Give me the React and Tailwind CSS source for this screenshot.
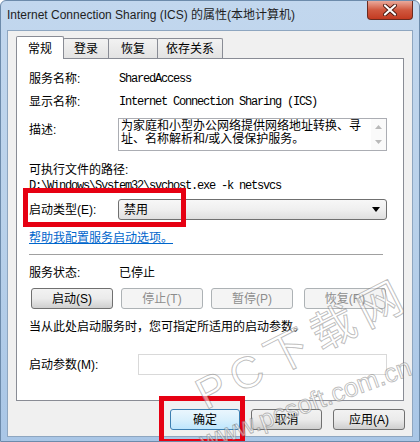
const cjk = "font-['Liberation_Sans','Noto_Sans_CJK_SC',sans-serif]";
const mono = "font-['Liberation_Mono','Noto_Sans_CJK_SC',monospace] tracking-[-1.2px]";

const tabs = [
  { label: "常规", w: "w-[48px]", active: true },
  { label: "登录", w: "w-[46px]" },
  { label: "恢复", w: "w-[50px]" },
  { label: "依存关系", w: "w-[66px]" },
];

const Btn = ({ children, w = "w-[82px]", disabled, primary }) => (
  <div
    className={`${w} h-[21px] flex items-center justify-center rounded-[3px] border text-[12px] ${
      disabled
        ? "border-[#adb2b5] bg-[#f4f4f4] text-[#8d8d8d]"
        : primary
        ? "border-[#3c7fb1] bg-gradient-to-b from-[#eaf6fd] via-[#d9f0fc] to-[#bee6fd] text-black"
        : "border-[#707070] bg-gradient-to-b from-[#f2f2f2] via-[#ebebeb] to-[#cfcfcf] text-black"
    }`}
  >
    {children}
  </div>
);

const Label = ({ children, className = "" }) => (
  <div className={`w-[90px] shrink-0 text-[12px] leading-[16px] ${className}`}>{children}</div>
);

export default function App() {
  return (
    <div className={`relative w-[420px] h-[442px] overflow-hidden rounded-t-[6px] border border-[#6d8bab] bg-gradient-to-b from-[#c2d7ee] via-[#b9d1ea] to-[#a9c6e6] ${cjk} text-black`}>
      {/* title bar */}
      <div className="h-[29px] flex items-start">
        <div className="pl-[6px] pt-[6px] text-[12px] leading-[16px] text-[#1e1e1e]">
          Internet Connection Sharing (ICS) 的属性(本地计算机)
        </div>
        <div className="ml-auto mr-[6px] w-[46px] h-[19px] rounded-b-[4px] border border-t-0 border-[#6b2a1f] bg-gradient-to-b from-[#e9a99b] via-[#d0583f] to-[#c33a20] flex items-center justify-center">
          <svg width="14" height="12" viewBox="0 0 14 12">
            <path d="M2 1.5 L12 10.5 M12 1.5 L2 10.5" stroke="#4a1a12" strokeWidth="4" strokeLinecap="round" />
            <path d="M2 1.5 L12 10.5 M12 1.5 L2 10.5" stroke="#ffffff" strokeWidth="2.2" strokeLinecap="round" />
          </svg>
        </div>
      </div>

      {/* client area */}
      <div className="mx-[6px] h-[407px] border border-[#8ea6c0] bg-[#f0f0f0] flex flex-col">
        {/* tabs */}
        <div className="flex items-end pl-[8px] pt-[4px] h-[27px]">
          {tabs.map((t) =>
            t.active ? (
              <div
                key={t.label}
                className={`${t.w} h-[23px] -mb-px relative z-10 bg-white border border-b-0 border-[#898c95] rounded-t-[2px] text-[12px] flex items-start justify-center pt-[3px]`}
              >
                {t.label}
              </div>
            ) : (
              <div
                key={t.label}
                className={`${t.w} h-[20px] -ml-px bg-gradient-to-b from-[#f2f2f2] to-[#e3e3e3] border border-b-0 border-[#898c95] rounded-t-[2px] text-[12px] flex items-center justify-center`}
              >
                {t.label}
              </div>
            )
          )}
        </div>

        {/* tab panel */}
        <div className="mx-[8px] h-[343px] bg-white border border-[#898c95] px-[12px] flex flex-col">
          <div className="flex mt-[12px]">
            <Label>服务名称:</Label>
            <div className={`${mono} text-[12px] leading-[16px]`}>SharedAccess</div>
          </div>
          <div className="flex mt-[7px]">
            <Label>显示名称:</Label>
            <div className={`${mono} text-[12px] leading-[16px]`}>Internet Connection Sharing (ICS)</div>
          </div>
          <div className="flex mt-[8px]">
            <Label className="pt-[4px]">描述:</Label>
            <div className="-ml-px w-[269px] h-[33px] border border-[#abadb3] flex">
              <div className="flex-1 pl-[2px] pt-[1px] text-[12px] leading-[13px]">
                <div className="whitespace-nowrap">为家庭和小型办公网络提供网络地址转换、寻</div>
                <div className="whitespace-nowrap">址、名称解析和/或入侵保护服务。</div>
              </div>
              <div className="w-[15px] flex flex-col items-center justify-between py-[6px] bg-[#fafafa]">
                <svg width="7" height="4" viewBox="0 0 7 4"><path d="M0 4 L3.5 0 L7 4 Z" fill="#b9b9b9" /></svg>
                <svg width="7" height="4" viewBox="0 0 7 4"><path d="M0 0 L3.5 4 L7 0 Z" fill="#b9b9b9" /></svg>
              </div>
            </div>
          </div>
          <div className="mt-[11px] text-[12px] leading-[16px]">可执行文件的路径:</div>
          <div className={`${mono} text-[12px] leading-[16px]`}>D:\Windows\System32\svchost.exe -k netsvcs</div>
          <div className="flex items-center mt-[5px]">
            <Label>启动类型(E):</Label>
            <div className="-ml-px w-[269px] h-[21px] rounded-[3px] border border-[#707070] bg-gradient-to-b from-[#f7f7f7] via-[#efefef] to-[#dfdfdf] flex items-center pl-[5px] pr-[6px] text-[12px]">
              <span>禁用</span>
              <svg className="ml-auto" width="8" height="5" viewBox="0 0 8 5"><path d="M0 0 L8 0 L4 5 Z" fill="#000" /></svg>
            </div>
          </div>
          <div className="mt-[10px] text-[12px] leading-[16px] text-[#0066cc] underline w-fit">帮助我配置服务启动选项。</div>
          <div className="mt-[8px] h-[2px] border-t border-[#a0a0a0] border-b border-b-white mr-[8px]" />
          <div className="flex mt-[9px]">
            <Label>服务状态:</Label>
            <div className="text-[12px] leading-[16px]">已停止</div>
          </div>
          <div className="flex mt-[7px] pl-[2px] gap-[8px]">
            <Btn>启动(S)</Btn>
            <Btn disabled>停止(T)</Btn>
            <Btn disabled>暂停(P)</Btn>
            <div className="ml-[3px]"><Btn disabled>恢复(R)</Btn></div>
          </div>
          <div className="mt-[10px] text-[12px] leading-[16px] whitespace-nowrap">当从此处启动服务时，您可指定所适用的启动参数。</div>
          <div className="flex items-center mt-[19px]">
            <Label className="w-[109px]">启动参数(M):</Label>
            <div className="w-[249px] h-[21px] border border-[#d9d9d9] bg-white" />
          </div>
        </div>

        {/* dialog buttons */}
        <div className="flex justify-end gap-[11px] pr-[7px] mt-[8px]">
          <Btn w="w-[70px]" primary>确定</Btn>
          <Btn w="w-[71px]">取消</Btn>
          <Btn w="w-[72px]">应用(A)</Btn>
        </div>
      </div>

      {/* red annotation boxes */}
      <div className="absolute left-[22px] top-[187px] w-[163px] h-[39px] border-[5px] border-[#e60012]" />
      <div className="absolute left-[158px] top-[395px] w-[86px] h-[48px] border-[5px] border-[#e60012]" />

      {/* watermark */}
      <div className="absolute left-[198px] top-[374px] -rotate-[27deg] origin-left text-[44px] leading-none tracking-[8px] whitespace-nowrap text-[rgba(255,255,255,0.5)] [-webkit-text-stroke:1px_rgba(90,90,90,0.4)] font-['Liberation_Sans','Noto_Sans_CJK_SC',sans-serif] pointer-events-none">
        PC下载网
      </div>
      <div className="absolute left-[200px] top-[428px] -rotate-[20deg] origin-left text-[26px] leading-none whitespace-nowrap text-[rgba(255,255,255,0.5)] [-webkit-text-stroke:1px_rgba(90,90,90,0.4)] font-['Liberation_Sans',sans-serif] pointer-events-none">
        www.pcsoft.com.cn
      </div>
    </div>
  );
}
